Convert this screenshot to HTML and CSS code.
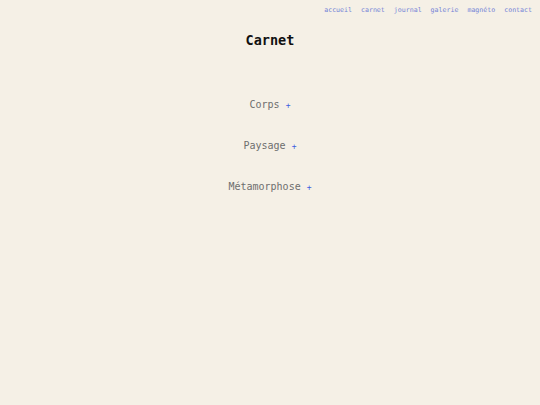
FILE: index.html
```html
<!DOCTYPE html>
<html lang="fr">
<head>
    <meta charset="UTF-8">
    <meta name="viewport" content="width=device-width, initial-scale=1.0">
    <title>Carnet</title>
    <link rel="stylesheet" href="styles.css">
</head>
<body>

    <nav class="menu">
        <a href="#">accueil</a>
        <a href="#">carnet</a>
        <a href="#">journal</a>
        <a href="#">galerie</a>
        <a href="#">magnéto</a>
        <a href="#">contact</a>
    </nav>

    <h1 class="title">Carnet</h1>

    <ul class="sections">
        <li><span class="name">Corps</span> <span class="more">+</span></li>
        <li><span class="name">Paysage</span> <span class="more">+</span></li>
        <li><span class="name">Métamorphose</span> <span class="more">+</span></li>
    </ul>

</body>
</html>
```

FILE: styles.css
```css
body {
    font-family: 'DejaVu Sans Mono', monospace;
    background-color: #f5f0e6;
    margin: 0;
    color: #6e6e6e;
}

.menu {
    display: flex;
    justify-content: flex-end;
    gap: 9px;
    padding: 6px 8px 0 0;
    font-size: 6.6px;
    line-height: 9px;
}

.menu a {
    color: #7383d6;
    text-decoration: none;
}

.title {
    text-align: center;
    font-size: 13.5px;
    color: #111;
    margin: 16px 0 0;
    line-height: 18px;
}

.sections {
    list-style: none;
    margin: 49px 0 0;
    padding: 0;
    text-align: center;
    font-size: 10px;
    line-height: 14px;
}

.sections li {
    margin-bottom: 26px;
}

.more {
    color: #3d5be0;
    font-size: 8px;
}
```
